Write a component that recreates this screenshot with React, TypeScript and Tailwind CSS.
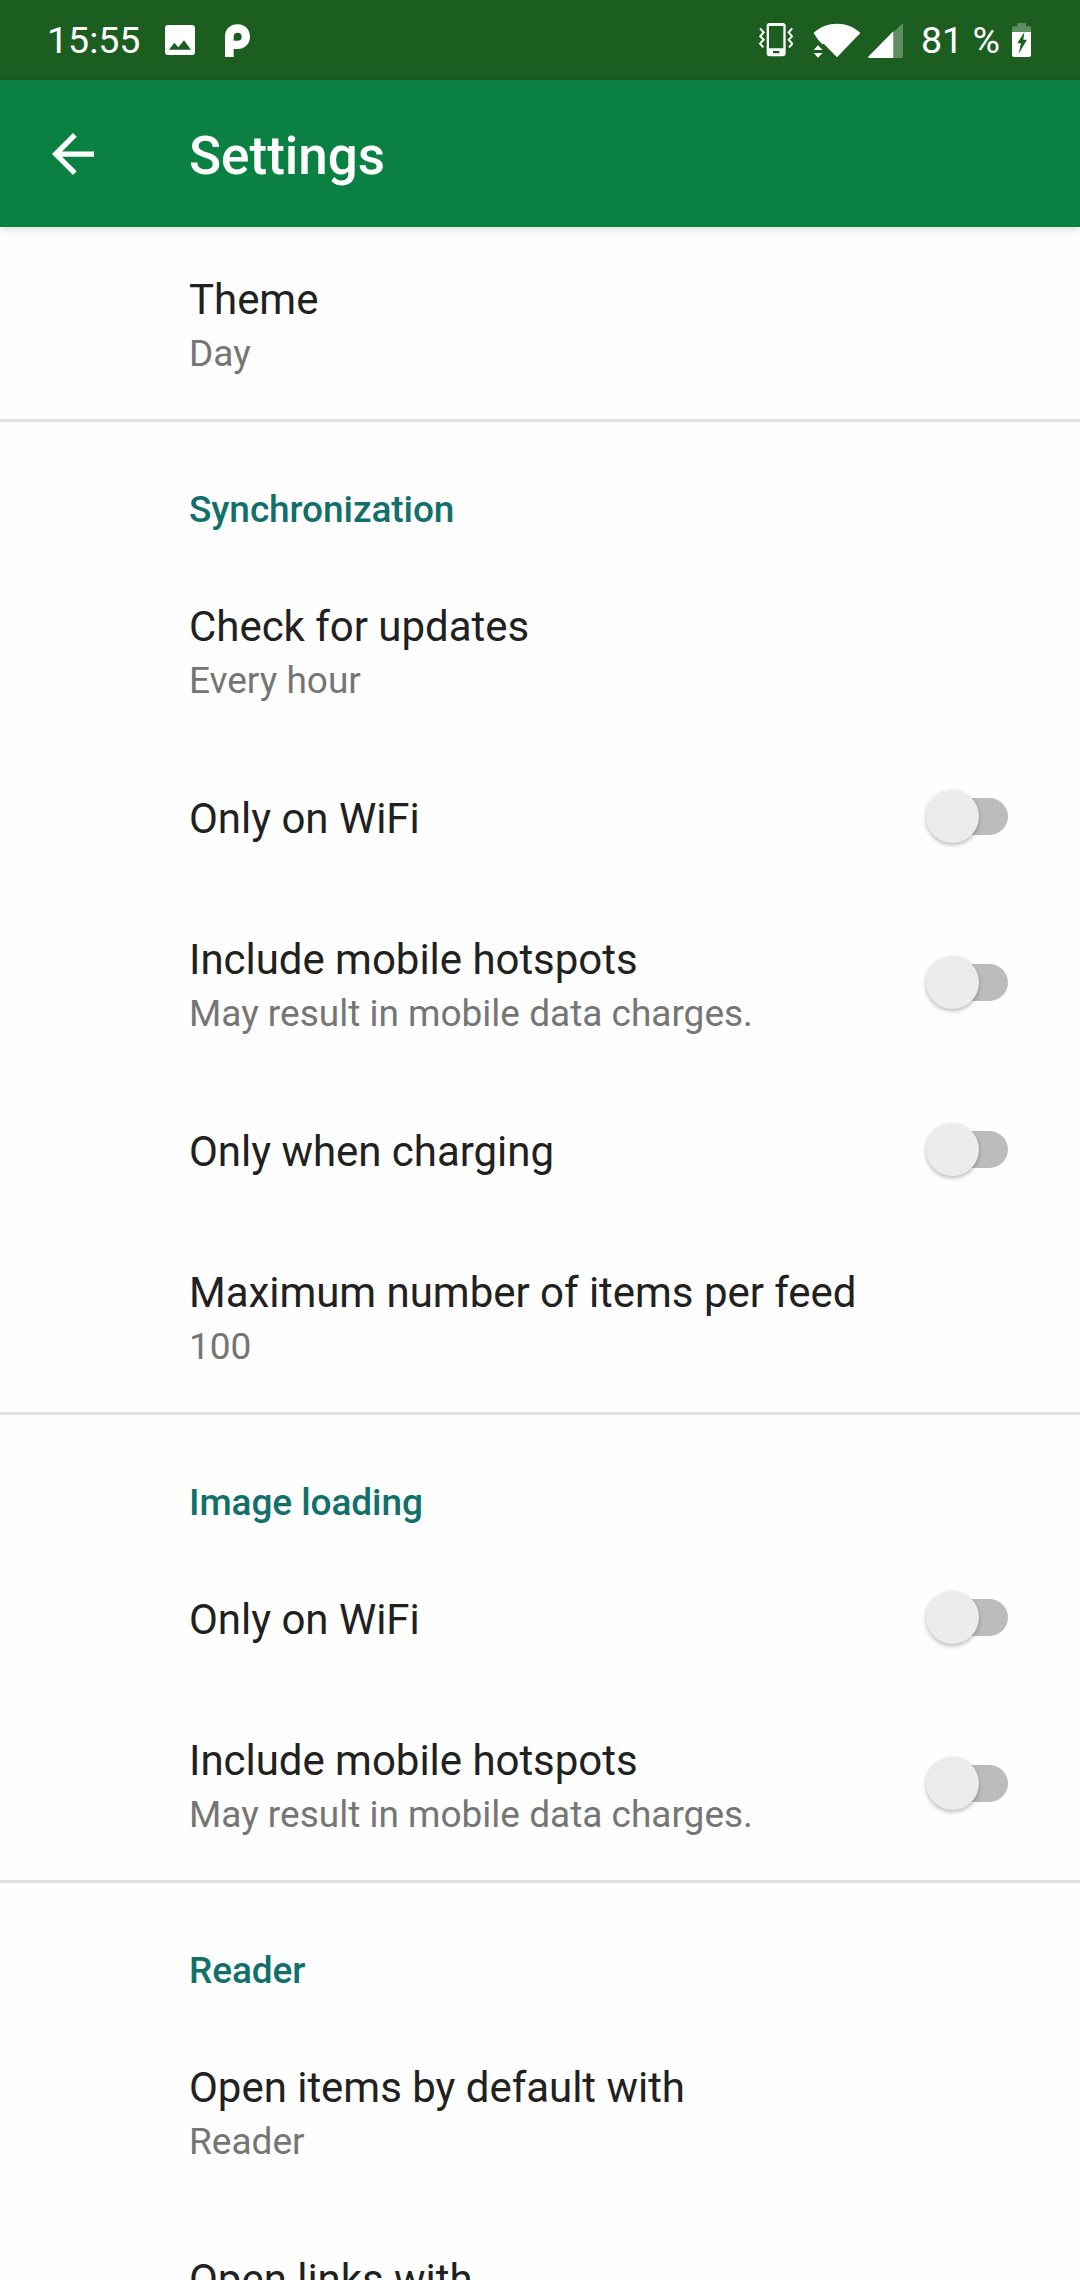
import React from "react";

function StatusBar() {
  return (
    <div className="flex h-20 shrink-0 items-center bg-[#1b5e20] text-white">
      <span className="ml-[47px] w-[94px] whitespace-nowrap pt-px text-[37.5px] leading-[43px]">15:55</span>
      <svg className="ml-6 h-[30px] w-[30px] shrink-0" viewBox="0 0 90 90" fill="white">
        <path
          fillRule="evenodd"
          d="M10 0H80Q90 0 90 10V80Q90 90 80 90H10Q0 90 0 80V10Q0 0 10 0ZM12 74H78L57 46L40 67L28 53Z"
        />
      </svg>
      <svg className="ml-[30px] h-[33px] w-[25px] shrink-0" viewBox="0 0 75 99" fill="white">
        <path
          fillRule="evenodd"
          d="M0 99V38C0 15 16 1 38 1S75 17 75 38S59 75 38 75H26V99ZM26 50H38A12 12 0 1 0 26 38Z"
        />
      </svg>

      <svg className="ml-auto h-[34px] w-[34px] shrink-0" viewBox="0 0 102 102" fill="none" stroke="white">
        <path
          fill="white"
          stroke="none"
          fillRule="evenodd"
          d="M32 0H71Q80 0 80 9V91Q80 100 71 100H32Q23 100 23 91V9Q23 0 32 0ZM30 9V76H73V9ZM42 84V91H61V84Z"
        />
        <path strokeWidth="6" d="M3 16L14 28L4 40L14 50L3 62L13 73M100 16L89 28L99 40L89 50L100 62L90 73" />
      </svg>
      <svg className="ml-5 h-[35px] w-[48px] shrink-0" viewBox="0 0 144 105" fill="white">
        <path d="M2 30C40 -7 104 -7 142 30L72 103L32 62L28 64L15 50Z" />
        <path fill="#1b5e20" d="M-2 80L15 58L36 80L15 106Z" />
        <path d="M2 81L15 67L29 81ZM2 90H29L15 104Z" />
      </svg>
      <svg className="ml-[7px] h-[35px] w-[35px] shrink-0" viewBox="0 0 105 105" fill="white">
        <path fillOpacity=".3" d="M76 28L105 0V99Q105 105 99 105H76Z" />
        <path d="M76 25V105H4Q-2 105 2 100Z" />
      </svg>
      <span className="ml-[18px] w-20 whitespace-nowrap pt-px text-[37.5px] leading-[43px]">81 %</span>
      <svg className="ml-[11px] mr-[49px] h-[34px] w-[19px] shrink-0" viewBox="0 0 57 102" fill="white">
        <path fillOpacity=".3" d="M16 0H42V10H52Q57 10 57 15V27H0V15Q0 10 5 10H16Z" />
        <path
          fillRule="evenodd"
          d="M0 27H57V96Q57 102 51 102H6Q0 102 0 96ZM37 27L16 61H27L20 92L45 50H34Z"
        />
      </svg>
    </div>
  );
}

function AppBar() {
  return (
    <header className="relative z-10 flex h-[147px] shrink-0 items-center bg-[#0b8043] shadow-[0_2px_8px_rgba(0,0,0,0.15)]">
      <svg className="ml-[52px] h-[42px] w-[42px] shrink-0" viewBox="4 4 16 16" fill="white">
        <path d="M20 11H7.83l5.59-5.59L12 4l-8 8 8 8 1.41-1.41L7.83 13H20v-2z" />
      </svg>
      <h1 className="ml-[95px] pt-[5px] text-[53px] font-medium leading-[62px] text-white">Settings</h1>
    </header>
  );
}

function Switch() {
  return (
    <div className="relative mr-[72px] flex h-[53px] w-[83px] shrink-0 items-center justify-end">
      <div className="h-[37px] w-[74px] rounded-full bg-[#bcbcbc]" />
      <div className="absolute left-px top-0 h-[53px] w-[53px] rounded-full bg-[#ececec] shadow-[0_2px_4px_rgba(0,0,0,0.28)]" />
    </div>
  );
}

function Row({ title, summary, toggle }: { title: string; summary?: string; toggle?: boolean }) {
  return (
    <div className="flex shrink-0 items-center pl-[189px]">
      <div className="flex-1 pb-11 pt-12">
        <div className="whitespace-nowrap text-[42px] leading-[49px] tracking-[-0.03px] text-[#212121]">{title}</div>
        {summary && (
          <div className="mt-2 whitespace-nowrap text-[37px] leading-[43px] text-[#757575]">{summary}</div>
        )}
      </div>
      {toggle && (
        <div className={summary ? "pb-0.5" : ""}>
          <Switch />
        </div>
      )}
    </div>
  );
}

function SectionHeader({ children }: { children: React.ReactNode }) {
  return (
    <div className="h-[135px] shrink-0 border-t-[3px] border-[#e0e0e0] pl-[189px] pt-[66px] text-[37px] font-medium leading-[43px] tracking-[-0.08px] text-[#11706b]">
      {children}
    </div>
  );
}

export default function App() {
  return (
    <div className="flex h-[2280px] w-[1080px] flex-col overflow-hidden bg-[#fefefe] font-['Roboto',sans-serif]">
      <StatusBar />
      <AppBar />
      <Row title="Theme" summary="Day" />
      <SectionHeader>Synchronization</SectionHeader>
      <Row title="Check for updates" summary="Every hour" />
      <Row title="Only on WiFi" toggle />
      <Row title="Include mobile hotspots" summary="May result in mobile data charges." toggle />
      <Row title="Only when charging" toggle />
      <Row title="Maximum number of items per feed" summary="100" />
      <SectionHeader>Image loading</SectionHeader>
      <Row title="Only on WiFi" toggle />
      <Row title="Include mobile hotspots" summary="May result in mobile data charges." toggle />
      <SectionHeader>Reader</SectionHeader>
      <Row title="Open items by default with" summary="Reader" />
      <Row title="Open links with" />
    </div>
  );
}
